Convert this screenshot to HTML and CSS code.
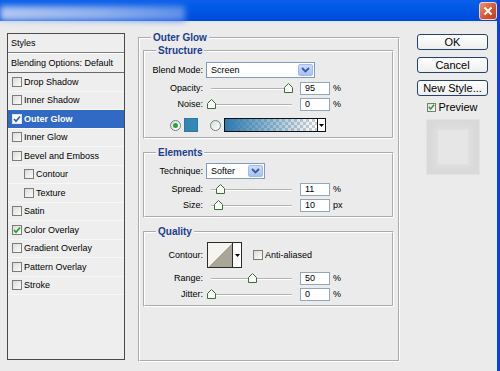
FILE: index.html
```html
<!DOCTYPE html>
<html lang="en">

<head>
    <meta charset="utf-8">
    <meta name="viewport" content="width=device-width, initial-scale=1.0">
    <title>Layer Style</title>
    <link rel="stylesheet" href="styles.css">
</head>

<body>
    <div class="window">
        <div class="titlebar">
            <div class="title_blur"></div>
            <div class="close_btn">
                <svg width="10" height="10" viewBox="0 0 10 10"><path d="M1.5 1.5 L8.5 8.5 M8.5 1.5 L1.5 8.5" stroke="#fff" stroke-width="2"/></svg>
            </div>
        </div>

        <div class="dialog">
            <ul class="styles_list">
                <li class="list_head">Styles</li>
                <li class="list_head blend">Blending Options: Default</li>
                <li><span class="check"></span>Drop Shadow</li>
                <li><span class="check"></span>Inner Shadow</li>
                <li class="selected"><span class="check"><svg width="8" height="8" viewBox="0 0 8 8"><path d="M1 4 L3 6.2 L7 1.5" fill="none" stroke="#2b5fb4" stroke-width="1.7"/></svg></span>Outer Glow</li>
                <li><span class="check"></span>Inner Glow</li>
                <li><span class="check"></span>Bevel and Emboss</li>
                <li class="sub"><span class="check"></span>Contour</li>
                <li class="sub"><span class="check"></span>Texture</li>
                <li><span class="check"></span>Satin</li>
                <li><span class="check"><svg width="8" height="8" viewBox="0 0 8 8"><path d="M1 4 L3 6.2 L7 1.5" fill="none" stroke="#22a022" stroke-width="1.7"/></svg></span>Color Overlay</li>
                <li><span class="check"></span>Gradient Overlay</li>
                <li><span class="check"></span>Pattern Overlay</li>
                <li><span class="check"></span>Stroke</li>
            </ul>

            <fieldset class="group outer">
                <legend>Outer Glow</legend>

                <fieldset class="group structure">
                    <legend>Structure</legend>
                    <div class="row first">
                        <span class="label">Blend Mode:</span>
                        <div class="select blend_select">
                            <span class="select_value">Screen</span>
                            <span class="select_arrow"><svg width="9" height="6" viewBox="0 0 9 6"><path d="M1 1 L4.5 4.5 L8 1" fill="none" stroke="#3b5a9a" stroke-width="1.8"/></svg></span>
                        </div>
                    </div>
                    <div class="row">
                        <span class="label">Opacity:</span>
                        <div class="slider">
                            <div class="track">
                                <span class="thumb" style="left: 95%"><svg width="9" height="10" viewBox="0 0 9 10"><path d="M0.5 9.5 V4.5 L4.5 0.5 L8.5 4.5 V9.5 Z" fill="#fbfdf8" stroke="#3f6b3f"/></svg></span>
                            </div>
                        </div>
                        <span class="field">95</span><span class="unit">%</span>
                    </div>
                    <div class="row">
                        <span class="label">Noise:</span>
                        <div class="slider">
                            <div class="track">
                                <span class="thumb" style="left: 0%"><svg width="9" height="10" viewBox="0 0 9 10"><path d="M0.5 9.5 V4.5 L4.5 0.5 L8.5 4.5 V9.5 Z" fill="#fbfdf8" stroke="#3f6b3f"/></svg></span>
                            </div>
                        </div>
                        <span class="field">0</span><span class="unit">%</span>
                    </div>
                    <div class="row color_row">
                        <span class="radio on"></span>
                        <span class="swatch"></span>
                        <span class="radio"></span>
                        <div class="gradient">
                            <span class="gradient_bar"></span>
                            <span class="drop"><svg width="5" height="3" viewBox="0 0 5 3"><path d="M0 0 H5 L2.5 3 Z" fill="#000"/></svg></span>
                        </div>
                    </div>
                </fieldset>

                <fieldset class="group elements">
                    <legend>Elements</legend>
                    <div class="row first">
                        <span class="label">Technique:</span>
                        <div class="select technique_select">
                            <span class="select_value">Softer</span>
                            <span class="select_arrow"><svg width="9" height="6" viewBox="0 0 9 6"><path d="M1 1 L4.5 4.5 L8 1" fill="none" stroke="#3b5a9a" stroke-width="1.8"/></svg></span>
                        </div>
                    </div>
                    <div class="row">
                        <span class="label">Spread:</span>
                        <div class="slider">
                            <div class="track">
                                <span class="thumb" style="left: 11%"><svg width="9" height="10" viewBox="0 0 9 10"><path d="M0.5 9.5 V4.5 L4.5 0.5 L8.5 4.5 V9.5 Z" fill="#fbfdf8" stroke="#3f6b3f"/></svg></span>
                            </div>
                        </div>
                        <span class="field">11</span><span class="unit">%</span>
                    </div>
                    <div class="row">
                        <span class="label">Size:</span>
                        <div class="slider">
                            <div class="track">
                                <span class="thumb" style="left: 9%"><svg width="9" height="10" viewBox="0 0 9 10"><path d="M0.5 9.5 V4.5 L4.5 0.5 L8.5 4.5 V9.5 Z" fill="#fbfdf8" stroke="#3f6b3f"/></svg></span>
                            </div>
                        </div>
                        <span class="field">10</span><span class="unit">px</span>
                    </div>
                </fieldset>

                <fieldset class="group quality">
                    <legend>Quality</legend>
                    <div class="row contour_row">
                        <span class="label">Contour:</span>
                        <div class="contour">
                            <span class="contour_graph"></span>
                            <span class="drop"><svg width="5" height="3" viewBox="0 0 5 3"><path d="M0 0 H5 L2.5 3 Z" fill="#000"/></svg></span>
                        </div>
                        <span class="check anti"></span>Anti-aliased
                    </div>
                    <div class="row range_row">
                        <span class="label">Range:</span>
                        <div class="slider">
                            <div class="track">
                                <span class="thumb" style="left: 50%"><svg width="9" height="10" viewBox="0 0 9 10"><path d="M0.5 9.5 V4.5 L4.5 0.5 L8.5 4.5 V9.5 Z" fill="#fbfdf8" stroke="#3f6b3f"/></svg></span>
                            </div>
                        </div>
                        <span class="field">50</span><span class="unit">%</span>
                    </div>
                    <div class="row">
                        <span class="label">Jitter:</span>
                        <div class="slider">
                            <div class="track">
                                <span class="thumb" style="left: 0%"><svg width="9" height="10" viewBox="0 0 9 10"><path d="M0.5 9.5 V4.5 L4.5 0.5 L8.5 4.5 V9.5 Z" fill="#fbfdf8" stroke="#3f6b3f"/></svg></span>
                            </div>
                        </div>
                        <span class="field">0</span><span class="unit">%</span>
                    </div>
                </fieldset>
            </fieldset>

            <div class="side">
                <button class="btn">OK</button>
                <button class="btn">Cancel</button>
                <button class="btn">New Style...</button>
                <div class="preview_row">
                    <span class="check"><svg width="8" height="8" viewBox="0 0 8 8"><path d="M1 4 L3 6.2 L7 1.5" fill="none" stroke="#22a022" stroke-width="1.7"/></svg></span>Preview
                </div>
                <div class="preview_box">
                    <div class="preview_inner"></div>
                </div>
            </div>
        </div>
    </div>
</body>

</html>
```

FILE: styles.css
```css
* {
    box-sizing: border-box;
}

body {
    margin: 0;
    background-color: #ebebeb;
    font-family: "Liberation Sans", Arial, sans-serif;
    font-size: 9px;
    color: #000;
}

.window {
    width: 500px;
    height: 371px;
    border-right: 3px solid #0a46d4;
    overflow: hidden;
}

/* title bar */

.titlebar {
    height: 23px;
    display: flex;
    justify-content: space-between;
    align-items: flex-start;
    background: linear-gradient(#0b5fea, #0058e7 40%, #004ad9);
    border-bottom: 2px solid #e4e7f3;
}

.title_blur {
    width: 185px;
    height: 15px;
    margin-top: 6px;
    background: linear-gradient(to right, #b3c8f0, #8fb0ee 55%, #5d8fe8);
    filter: blur(3px);
}

.close_btn {
    width: 18px;
    height: 18px;
    margin-top: 2px;
    border: 1px solid #f3d3c8;
    border-radius: 3px;
    background: linear-gradient(135deg, #f09070, #d4532f 60%, #c2401e);
    display: flex;
    align-items: center;
    justify-content: center;
}

/* dialog */

.dialog {
    display: flex;
    align-items: flex-start;
    padding: 10px 0 0 7px;
}

.styles_list {
    list-style: none;
    margin: 0;
    padding: 0;
    width: 118px;
    height: 327px;
    border: 1px solid #4a4a4a;
    background-color: #eeeeee;
}

.styles_list li {
    height: 18.5px;
    display: flex;
    align-items: center;
    padding-left: 4px;
    border-bottom: 1px solid #f7f7f7;
    white-space: nowrap;
}

.styles_list .list_head {
    height: 19px;
    padding-left: 3px;
    border-bottom: 1px solid #7d7d7d;
}

.styles_list .blend {
    height: 20px;
    border-top: 1px solid #fff;
    border-bottom: 1px solid #6a6a6a;
}

.styles_list .sub {
    padding-left: 16px;
}

.styles_list .selected {
    background-color: #316ac5;
    color: #fff;
    font-weight: bold;
}

.check {
    width: 10px;
    height: 10px;
    margin-right: 2px;
    border: 1px solid #7b7b7b;
    background: linear-gradient(135deg, #dcdcd6, #fbfbfb);
    display: flex;
    align-items: center;
    justify-content: center;
    flex-shrink: 0;
}

.selected .check {
    background: #fff;
    border-color: #dfe6f3;
}

/* group boxes */

fieldset.group {
    margin: 0;
    min-width: 0;
    border: 2px groove #fff;
    padding: 4px 4px 3px 5px;
}

fieldset.group legend {
    font-size: 10px;
    line-height: 12px;
    font-weight: bold;
    color: #1d3d8e;
    padding: 0 2px;
    margin-left: 6px;
}

fieldset.outer {
    width: 262px;
    height: 330px;
    margin: -1px 0 0 13px;
    padding: 1px 4px 0 3px;
}

fieldset.outer > legend {
    margin-left: 8px;
}

fieldset.structure {
    padding-top: 5px;
    padding-bottom: 4px;
}

fieldset.elements,
fieldset.quality {
    margin-top: 8px;
}

.row {
    display: flex;
    align-items: center;
    height: 16px;
    white-space: nowrap;
}

.row.first {
    margin-bottom: 2px;
}

.label {
    width: 53px;
    margin-right: 3px;
    text-align: right;
}

/* combo boxes */

.select {
    height: 16px;
    display: flex;
    align-items: center;
    justify-content: space-between;
    border: 1px solid #7f9db9;
    background-color: #fff;
    padding: 1px;
}

.blend_select {
    width: 109px;
}

.technique_select {
    width: 59px;
}

.select_value {
    padding-left: 3px;
}

.select_arrow {
    width: 15px;
    height: 12px;
    border: 1px solid #a3baee;
    border-radius: 2px;
    background: linear-gradient(#cddcfb, #a9c0f3);
    display: flex;
    align-items: center;
    justify-content: center;
}

/* sliders and number fields */

.slider {
    position: relative;
    width: 90px;
    height: 16px;
}

.track {
    position: absolute;
    left: 5px;
    right: 4px;
    top: 8px;
    height: 2px;
    border-top: 1px solid #b3b3b3;
    border-bottom: 1px solid #fff;
}

.thumb {
    position: absolute;
    top: -6px;
    width: 9px;
    height: 10px;
    margin-left: -4px;
    display: flex;
}

.field {
    width: 30px;
    height: 13px;
    margin-left: 4px;
    padding-left: 4px;
    line-height: 11px;
    border: 1px solid #94a6b8;
    background-color: #fff;
}

.unit {
    margin-left: 3px;
}

/* colour row */

.color_row {
    margin-top: 5px;
    padding-left: 20px;
}

.radio {
    width: 11px;
    height: 11px;
    border: 1px solid #6f8190;
    border-radius: 50%;
    background: linear-gradient(135deg, #dcdcd6, #fff);
    display: flex;
    align-items: center;
    justify-content: center;
}

.radio.on::after {
    content: "";
    width: 5px;
    height: 5px;
    border-radius: 50%;
    background-color: #2ea23a;
}

.swatch {
    width: 14px;
    height: 14px;
    margin: 0 12px 0 3px;
    background-color: #3486b5;
    border: 1px solid #2d77a2;
}

.gradient {
    width: 102px;
    height: 14px;
    margin-left: 3px;
    display: flex;
    border: 1px solid #111;
}

.gradient_bar {
    flex: 1;
    background:
        linear-gradient(to right, #2b7ab0, rgba(43, 122, 176, 0.55) 45%, rgba(43, 122, 176, 0)),
        repeating-conic-gradient(#cfcfcf 0 25%, #fff 0 50%) 0 0 / 6px 6px;
}

.drop {
    width: 8px;
    border-left: 1px solid #111;
    background-color: #fff;
    display: flex;
    align-items: center;
    justify-content: center;
}

/* contour */

.contour_row {
    height: 26px;
}

.contour {
    width: 35px;
    height: 26px;
    margin-left: 1px;
    display: flex;
    border: 1px solid #2b2b2b;
}

.contour_graph {
    flex: 1;
    background: linear-gradient(to top left, #a9a697 50%, #f6f4ee 50%);
}

.contour .drop {
    width: 9px;
    border-left-color: #2b2b2b;
}

.check.anti {
    margin-left: 11px;
    margin-right: 2px;
}

.range_row {
    margin-top: 2px;
}

/* right column */

.side {
    width: 71px;
    margin: 1px 0 0 17px;
    display: flex;
    flex-direction: column;
    align-items: center;
}

.btn {
    width: 71px;
    height: 16px;
    margin: 0 0 7px;
    padding: 0;
    border: 1px solid #24426e;
    border-radius: 3px;
    background: linear-gradient(#ffffff, #eeeeec);
    font-family: "Liberation Sans", Arial, sans-serif;
    font-size: 11px;
    line-height: 14px;
    color: #000;
}

.preview_row {
    height: 12px;
    margin-top: -2px;
    display: flex;
    align-items: center;
    font-size: 11px;
}

.preview_row .check {
    width: 9px;
    height: 9px;
}

.preview_box {
    width: 54px;
    height: 56px;
    margin-top: 6px;
    background-color: #d9d9d9;
    border: 1px solid #e2e2e2;
    display: flex;
    align-items: center;
    justify-content: center;
}

.preview_inner {
    width: 30px;
    height: 34px;
    background-color: #e6e6e6;
    box-shadow: 0 0 6px 3px #e1e1e1;
}
```
